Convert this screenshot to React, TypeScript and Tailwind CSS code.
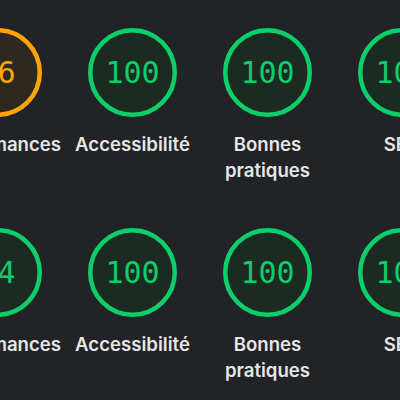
import React from "react";

type Gauge = { score: string; label: string; tone: "green" | "orange" };

const rows: Gauge[][] = [
  [
    { score: "86", label: "Performances", tone: "orange" },
    { score: "100", label: "Accessibilité", tone: "green" },
    { score: "100", label: "Bonnes pratiques", tone: "green" },
    { score: "100", label: "SEO", tone: "green" },
  ],
  [
    { score: "94", label: "Performances", tone: "green" },
    { score: "100", label: "Accessibilité", tone: "green" },
    { score: "100", label: "Bonnes pratiques", tone: "green" },
    { score: "100", label: "SEO", tone: "green" },
  ],
];

const ScoreGauge = ({ score, label, tone }: Gauge) => {
  const ring = tone === "green" ? "#0cce6b" : "#ffa400";
  const fill = tone === "green" ? "#1c2b22" : "#2d2820";
  const text = tone === "green" ? "text-[#0cce6b]" : "text-[#ffa400]";

  return (
    <div className="flex w-[135px] shrink-0 flex-col items-center">
      <div className="relative h-[89px] w-[89px]">
        <svg viewBox="0 0 89 89" className="h-[89px] w-[89px]">
          <circle cx="44.5" cy="44.5" r="42.25" fill={fill} stroke={ring} strokeWidth="4.5" />
        </svg>
        <span
          className={`absolute inset-0 flex items-center justify-center text-[30px] leading-none ${text}`}
          style={{ fontFamily: '"DejaVu Sans Mono", monospace' }}
        >
          {score}
        </span>
      </div>
      <div className="mt-[14px] max-w-[128px] text-center text-[18.6px] leading-[26px] font-semibold text-[#e6e6e6] [font-family:Inter,'Liberation_Sans',sans-serif]">
        {label}
      </div>
    </div>
  );
};

export default function App() {
  return (
    <div className="h-[400px] w-[400px] overflow-hidden bg-[#222326]">
      {rows.map((row, i) => (
        <div key={i} className="-ml-[70px] flex h-[200px] pt-[28px]">
          {row.map((g, j) => (
            <ScoreGauge key={j} {...g} />
          ))}
        </div>
      ))}
    </div>
  );
}
